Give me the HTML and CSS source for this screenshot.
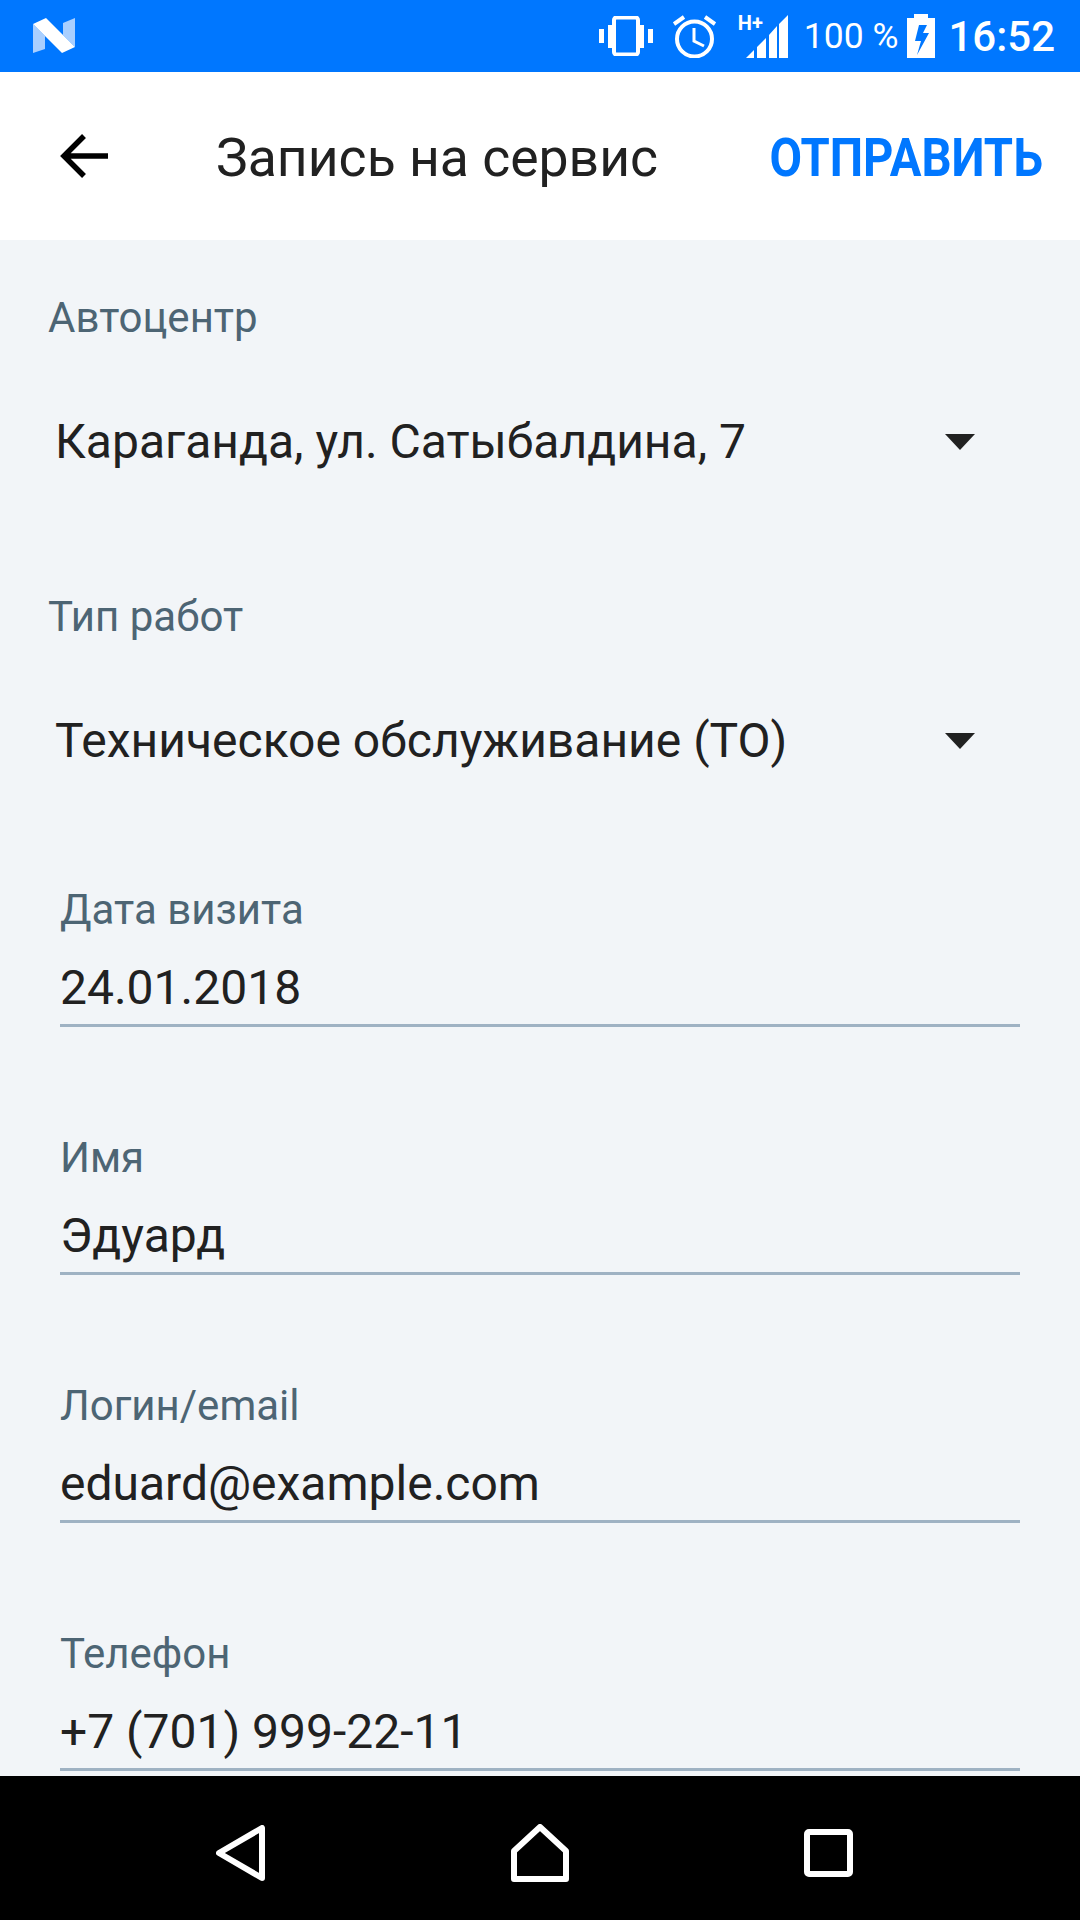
FILE: index.html
```html
<!DOCTYPE html>
<html lang="ru">
<head>
<meta charset="utf-8">
<title>Запись на сервис</title>
<link rel="stylesheet" href="styles.css">
</head>
<body>
<div class="screen">
  <header class="status">
    <svg class="nlogo" width="44" height="36" viewBox="0 0 44 36">
      <path fill="#a9cfff" d="M1 6V35L13 31V18Z"/>
      <path fill="#a9cfff" d="M31 5 43 0V29L31 17Z"/>
      <path fill="#fff" d="M1 6 14 0 43 29 30 35Z"/>
    </svg>
    <div class="status-right">
      <svg class="i-vib" width="54" height="40" viewBox="0 0 54 40"><rect x="15" y="1.500" width="24" height="37" rx="2.500" fill="none" stroke="#fff" stroke-width="4"/><path fill="#fff" d="M0 13h5v14H0ZM9 9h5v23H9ZM40 9h5v23h-5ZM49 13h5v14h-5Z"/></svg>
      <svg class="i-alarm" width="43" height="44" viewBox="0 0 43 44"><circle cx="21.500" cy="25" r="17.500" fill="none" stroke="#fff" stroke-width="4"/><path fill="none" stroke="#fff" stroke-width="3" d="M21 14v13l10 5"/><path fill="none" stroke="#fff" stroke-width="4" d="M1 10 11 3M42 10 32 3"/></svg>
      <div class="signal">
        <span class="hplus">H+</span>
        <svg width="42" height="43" viewBox="0 0 42 43"><path fill="#fff" d="M0 43 8 35V43ZM11 43V32L20 23V43ZM23 43V20L31 11V43ZM33 43V9L42 0V43Z"/></svg>
      </div>
      <span class="pct">100 %</span>
      <svg class="i-batt" width="28" height="44" viewBox="0 0 28 44"><path fill="#fff" fill-rule="evenodd" d="M7 0h14v4h7v40H0V4h7ZM12 11 8 27h6l-4 14 12-22h-6l4-8Z"/></svg>
      <span class="clock">16:52</span>
    </div>
  </header>
  <header class="toolbar">
    <svg class="back" width="48" height="48" viewBox="0 0 48 48"><path fill="none" stroke="#000" stroke-width="5.500" d="M48 24H5M24 4 4 24 24 44"/></svg>
    <h1 class="title">Запись на сервис</h1>
    <span class="action">ОТПРАВИТЬ</span>
  </header>
  <main class="form">
    <section class="picker">
      <div class="picker-label">Автоцентр</div>
      <div class="picker-value"><span>Караганда, ул. Сатыбалдина, 7</span><i class="caret"></i></div>
    </section>
    <section class="picker">
      <div class="picker-label">Тип работ</div>
      <div class="picker-value"><span>Техническое обслуживание (ТО)</span><i class="caret"></i></div>
    </section>
    <div class="fields">
      <section class="field"><div class="field-label">Дата визита</div><div class="field-value">24.01.2018</div></section>
      <section class="field"><div class="field-label">Имя</div><div class="field-value">Эдуард</div></section>
      <section class="field"><div class="field-label">Логин/email</div><div class="field-value">eduard@example.com</div></section>
      <section class="field"><div class="field-label">Телефон</div><div class="field-value">+7 (701) 999-22-11</div></section>
    </div>
  </main>
  <footer class="navbar">
    <svg class="nav-back" width="50" height="56" viewBox="0 0 50 56"><path fill="none" stroke="#fff" stroke-width="6" stroke-linejoin="round" d="M46 3V53L3 28Z"/></svg>
    <svg class="nav-home" width="58" height="59" viewBox="0 0 58 59"><path fill="none" stroke="#fff" stroke-width="6" stroke-linejoin="round" d="M3 55V27L29 3 55 27V55Z"/></svg>
    <svg width="49" height="48" viewBox="0 0 49 48"><rect x="3" y="3" width="43" height="42" rx="2" fill="none" stroke="#fff" stroke-width="6"/></svg>
  </footer>
</div>
</body>
</html>
```
FILE: styles.css
```css
* { box-sizing: border-box; margin: 0; padding: 0; }
html, body { width: 1080px; height: 1920px; overflow: hidden; }
body { font-family: Roboto, "Noto Sans", sans-serif; background: #f2f5f8; }
.screen { width: 1080px; height: 1920px; display: flex; flex-direction: column; overflow: hidden; }

.status { height: 72px; flex: none; background: #0077ff; color: #fff; display: flex; align-items: center; justify-content: space-between; padding: 0 25px 0 32px; }
.nlogo { display: block; }
.status-right { display: flex; align-items: center; }
.i-vib { margin-right: 20px; }
.i-alarm { margin-right: 22px; }
.signal { position: relative; width: 50px; height: 44px; display: flex; align-items: flex-end; justify-content: flex-end; margin-right: 16px; }
.hplus { position: absolute; left: 0; top: 0; font-size: 20px; font-weight: 700; line-height: 18px; }
.pct { font-size: 35.500px; margin-right: 9px; }
.i-batt { margin-right: 13px; }
.clock { font-size: 42px; font-weight: 500; }

.toolbar { height: 168px; flex: none; background: #fff; display: flex; align-items: center; padding: 0 37px 0 60px; }
.back { flex: none; }
.title { font-size: 53.500px; font-weight: 400; color: #212121; margin-left: 108px; flex: 1; padding-top: 3px; }
.action { font-size: 54px; font-weight: 700; color: #0077ff; transform: scaleX(.874); transform-origin: right center; padding-top: 3px; }

.form { flex: 1; min-height: 0; overflow: hidden; }
.picker { padding: 50px 48px 0; height: 299px; }
.picker-label { font-size: 42px; line-height: 56px; color: #4d6574; }
.picker-value { display: flex; align-items: center; justify-content: space-between; font-size: 48px; line-height: 60px; color: #212121; padding: 66px 57px 0 7px; }
.caret { display: block; width: 0; height: 0; border-left: 15px solid transparent; border-right: 15px solid transparent; border-top: 16px solid #212121; }

.fields { padding: 36px 60px 0; }
.field { height: 248px; }
.field-label { font-size: 42px; line-height: 52px; color: #4d6574; padding-top: 10px; box-sizing: content-box; }
.field-value { font-size: 48px; line-height: 60px; color: #212121; margin-top: 22px; border-bottom: 3px solid #9fb2c3; height: 69px; }

.navbar { height: 144px; flex: none; background: #000; display: flex; align-items: center; padding: 10px 0 0 216px; }
.nav-back { margin-right: 245px; }
.nav-home { margin-right: 235px; }
```
